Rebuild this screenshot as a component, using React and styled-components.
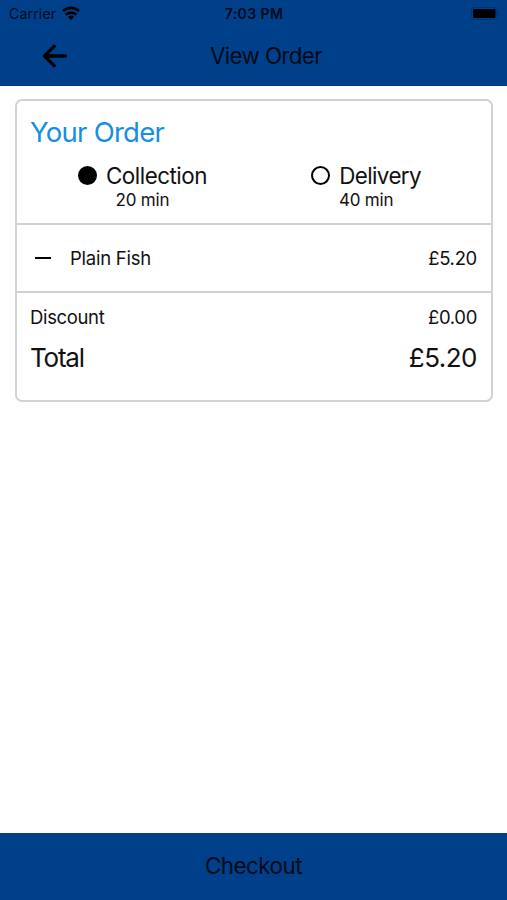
import styled, { createGlobalStyle } from "styled-components";

const GlobalStyle = createGlobalStyle`
  * {
    box-sizing: border-box;
  }
  body {
    margin: 0;
    background: #fff;
    color: #111;
    font-family: "Inter", "Liberation Sans", sans-serif;
  }
`;

const options = [
  { name: "Collection", time: "20 min", selected: true, spacing: -0.5 },
  { name: "Delivery", time: "40 min", selected: false, spacing: -0.6 },
];

const items = [{ name: "Plain Fish", price: "£5.20" }];

const App = () => {
  return (
    <Screen>
      <GlobalStyle />
      <Header>
        <StatusBar>
          <Carrier>
            <Text $size={14} $spacing={0.2}>Carrier</Text>
            <svg width="18" height="14" viewBox="0 0 18 14" fill="none" stroke="#000" strokeWidth="2.7">
              <path d="M1 5.1a11.6 11.6 0 0 1 16 0" />
              <path d="M3.7 8.7a7.6 7.6 0 0 1 10.6 0" />
              <path d="M9 14 5.9 11a4.6 4.6 0 0 1 6.2 0z" fill="#000" stroke="none" />
            </svg>
          </Carrier>
          <Text $size={14} $weight={600} $spacing={0.4}>7:03 PM</Text>
          <Battery width="28" height="13" viewBox="0 0 28 13">
            <rect x="0.5" y="0.5" width="25" height="12" rx="3" fill="none" stroke="#00234f" strokeOpacity="0.4" />
            <rect x="2" y="2" width="22.5" height="9" rx="1.2" fill="#000" />
            <path d="M27 4.5v4" stroke="#00234f" strokeOpacity="0.6" />
          </Battery>
        </StatusBar>
        <NavBar>
          <BackButton aria-label="Back">
            <svg width="26" height="24" viewBox="0 0 26 24" fill="none" stroke="#000" strokeWidth="3.4" strokeLinecap="round" strokeLinejoin="round">
              <path d="M23.5 12H3M12.2 2.4 2.6 12l9.6 9.6" />
            </svg>
          </BackButton>
          <Text as="h1" $size={22.4} $spacing={-0.65}>View Order</Text>
        </NavBar>
      </Header>

      <Card>
        <Top>
          <Text as="h2" $size={27.5} $spacing={-0.75} $color="#1590e0">Your Order</Text>
          <Options>
            {options.map((option) => (
              <Option key={option.name}>
                <OptionLabel>
                  <Radio $selected={option.selected} />
                  <Text $size={22.4} $spacing={option.spacing}>{option.name}</Text>
                </OptionLabel>
                <Text $size={17} $spacing={-0.2}>{option.time}</Text>
              </Option>
            ))}
          </Options>
        </Top>

        {items.map((item) => (
          <Item key={item.name}>
            <RemoveButton aria-label="Remove" />
            <Text $size={18.5} $spacing={-0.25}>{item.name}</Text>
            <Price>
              <Text $size={18.5} $spacing={-0.3}>{item.price}</Text>
            </Price>
          </Item>
        ))}

        <Totals>
          <TotalRow $height={34}>
            <Text $size={18.5} $spacing={-0.35}>Discount</Text>
            <Text $size={18.5} $spacing={-0.35}>£0.00</Text>
          </TotalRow>
          <TotalRow $height={47}>
            <Text $size={26} $spacing={-1.2}>Total</Text>
            <Text $size={26} $spacing={-0.5}>£5.20</Text>
          </TotalRow>
        </Totals>
      </Card>

      <Checkout>
        <Text $size={22.4} $spacing={-0.5} $color="#000a18">Checkout</Text>
      </Checkout>
    </Screen>
  );
};

const Screen = styled.main`
  display: flex;
  flex-direction: column;
  width: 507px;
  height: 900px;
`;

const Text = styled.span`
  margin: 0;
  color: ${({ $color }) => $color || "inherit"};
  font-size: ${({ $size }) => $size}px;
  font-weight: ${({ $weight }) => $weight || 400};
  letter-spacing: ${({ $spacing }) => $spacing}px;
  line-height: 1;
  white-space: nowrap;
`;

const Header = styled.header`
  height: 86px;
  background: #003f89;
  color: #000a18;
  flex-shrink: 0;
`;

const StatusBar = styled.div`
  display: grid;
  grid-template-columns: 1fr auto 1fr;
  align-items: center;
  height: 28px;
  padding: 0 8px 0 9px;
`;

const Carrier = styled.div`
  display: flex;
  align-items: center;
  gap: 6px;

  svg {
    margin-bottom: 3px;
  }
`;

const Battery = styled.svg`
  justify-self: end;
  margin-bottom: 1px;
`;

const NavBar = styled.nav`
  display: grid;
  grid-template-columns: 210px auto 1fr;
  align-items: center;
  height: 56px;
`;

const BackButton = styled.button`
  display: flex;
  padding: 0 0 0 42px;
  border: 0;
  background: none;
`;

const Card = styled.section`
  height: 303px;
  margin: 13px 14px 0 15px;
  border: 2px solid #d2d2d2;
  border-radius: 7px;
`;

const Top = styled.div`
  height: 124px;
  padding: 18px 13px 0;
  border-bottom: 2px solid #d2d2d2;
`;

const Options = styled.div`
  display: flex;
  justify-content: space-between;
  padding: 18px 57px 0 48px;
`;

const Option = styled.div`
  display: flex;
  flex-direction: column;
  align-items: center;
  gap: 5px;
`;

const OptionLabel = styled.div`
  display: flex;
  align-items: center;
  gap: 9px;
`;

const Radio = styled.span`
  width: 19px;
  height: 19px;
  border: 2px solid #000;
  border-radius: 50%;
  background: ${({ $selected }) => ($selected ? "#000" : "transparent")};
`;

const Item = styled.div`
  display: flex;
  align-items: center;
  height: 68px;
  padding: 0 14px 0 18px;
  border-bottom: 2px solid #d2d2d2;
`;

const RemoveButton = styled.button`
  width: 16px;
  height: 2px;
  margin-right: 19px;
  padding: 0;
  border: 0;
  background: #000;
`;

const Price = styled.div`
  display: flex;
  margin-left: auto;
`;

const Totals = styled.div`
  padding: 7px 14px 0 13px;
`;

const TotalRow = styled.div`
  display: flex;
  align-items: center;
  justify-content: space-between;
  height: ${({ $height }) => $height}px;
`;

const Checkout = styled.button`
  display: flex;
  align-items: center;
  justify-content: center;
  height: 67px;
  margin-top: auto;
  border: 0;
  background: #003f89;
  font-family: inherit;
`;

export default App;
